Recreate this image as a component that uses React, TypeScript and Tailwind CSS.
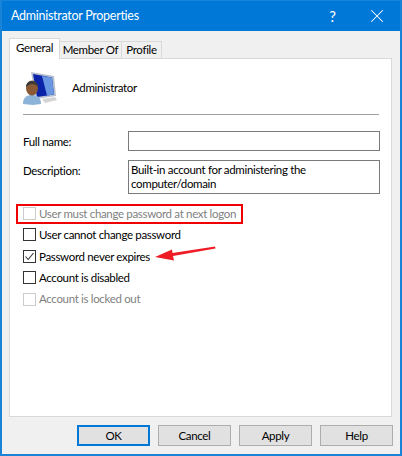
import { X } from 'lucide-react';

const font = { fontFamily: 'Lato, "Noto Sans", sans-serif' };

const options = [
  { label: 'User must change password at next logon', disabled: true },
  { label: 'User cannot change password' },
  { label: 'Password never expires', checked: true },
  { label: 'Account is disabled' },
  { label: 'Account is locked out', disabled: true },
];

const UserIcon = () => (
  <svg width="34" height="36" viewBox="0 0 34 36">
    <path d="M8 2 L31 6 L33 26 L13 29 Z" fill="#b9c0cf" />
    <path d="M10 4 L29 7.5 L31 24.5 L14 27 Z" fill="#0a23a8" />
    <path d="M19 6 L29 7.5 L31 24.5 L24 25.5 Z" fill="#6a97e2" />
    <path d="M19 29 L32 27 L34 30 L22 33 Z" fill="#d4d4d4" />
    <path d="M0 34 C0 27 4 25 9 25 C14 25 18 27 18 34 L10 35 Z" fill="#8db4d8" />
    <ellipse cx="9" cy="18" rx="6" ry="7.5" fill="#8a5a35" />
    <path d="M3 17 C3 9 15 9 15 17 C12 13 7 13 3 17 Z" fill="#3a3a3a" />
  </svg>
);

const Option = ({ label, disabled, checked }: { label: string; disabled?: boolean; checked?: boolean }) => (
  <div className="flex items-center gap-[3px] h-[13px]">
    <span className={`w-[13px] h-[13px] flex items-center justify-center border bg-white ${disabled ? 'border-[#cccccc]' : 'border-[#333333]'}`}>
      {checked && (
        <svg width="11" height="11" viewBox="0 0 11 11">
          <path d="M1.5 5.5 L4.2 8.5 L9.5 2" fill="none" stroke="#333333" strokeWidth="1.1" />
        </svg>
      )}
    </span>
    <span className={`text-[11.5px] tracking-[-0.33px] leading-none ${disabled ? 'text-[#7f7f7f]' : 'text-black'}`}>{label}</span>
  </div>
);

const Btn = ({ label, primary }: { label: string; primary?: boolean }) => (
  <button className={`w-[73px] h-[21px] bg-[#e1e1e1] text-[11.5px] tracking-[-0.33px] leading-none text-black ${primary ? 'border-2 border-[#0078d7]' : 'border border-[#adadad]'}`}>
    {label}
  </button>
);

export default function App() {
  return (
    <div style={font} className="relative w-[402px] h-[456px] bg-[#f0f0f0] border-x-2 border-b-2 border-[#1883d7] overflow-hidden flex flex-col">
      <div className="h-[31px] -mx-[2px] bg-[#0078d7] border-t border-[#1883d7] flex items-center pl-[11px] text-white shrink-0">
        <span className="text-[12.5px] tracking-[-0.28px] whitespace-nowrap">Administrator Properties</span>
        <span className="ml-auto mr-[30px] text-[15px] leading-none">?</span>
        <X size={22} strokeWidth={1.1} className="mr-[14px]" />
      </div>

      <div className="flex items-end h-[27px] ml-[7px] shrink-0 text-[11.5px] tracking-[-0.33px] leading-none">
        <div className="w-[51px] h-[21px] -mb-px relative z-10 bg-white border border-b-0 border-[#d9d9d9] flex items-center justify-center pb-[2px]">General</div>
        <div className="w-[62px] h-[17px] border border-l-0 border-b-0 border-[#d9d9d9] flex items-center justify-center whitespace-nowrap">Member Of</div>
        <div className="w-[40px] h-[17px] border border-l-0 border-b-0 border-[#d9d9d9] flex items-center justify-center">Profile</div>
      </div>

      <div className="ml-[7px] w-[383px] h-[359px] bg-white border border-[#d9d9d9] px-[13px] shrink-0 text-[11.5px] tracking-[-0.33px]">
        <div className="flex items-center h-[56px] pt-[2px] border-b border-[#a0a0a0] w-[356px]">
          <UserIcon />
          <span className="ml-[15px] leading-none">Administrator</span>
        </div>

        <div className="flex h-[20px] mt-[16px] w-[357px]">
          <span className="w-[105px] leading-[21px]">Full name:</span>
          <div className="w-[252px] h-[20px] border border-[#7a7a7a]" />
        </div>
        <div className="flex h-[34px] mt-[9px] w-[357px]">
          <span className="w-[105px] leading-[21px]">Description:</span>
          <div className="w-[252px] h-[34px] border border-[#7a7a7a] pl-[2px] pt-[2px] leading-[13.5px]">
            Built-in account for administering the computer/domain
          </div>
        </div>

        <div className="flex flex-col gap-[8.4px] mt-[13px]">
          {options.map(o => <Option key={o.label} {...o} />)}
        </div>
      </div>

      <div className="flex gap-[8px] ml-[75px] mt-[8px] shrink-0">
        <Btn label="OK" primary />
        <Btn label="Cancel" />
        <Btn label="Apply" />
        <Btn label="Help" />
      </div>

      {/* annotations over the dialog */}
      <div className="absolute left-[14px] top-[204px] w-[227px] h-[20px] border-2 border-[#f00000]" />
      <svg className="absolute left-[151px] top-[245px]" width="66" height="16" viewBox="0 0 66 16">
        <path d="M62 1.5 L62.5 3.5 L20 11 L21 15.5 L2 12 L19 4.5 L19.5 8 Z" fill="#ee1c25" />
      </svg>
    </div>
  );
}
